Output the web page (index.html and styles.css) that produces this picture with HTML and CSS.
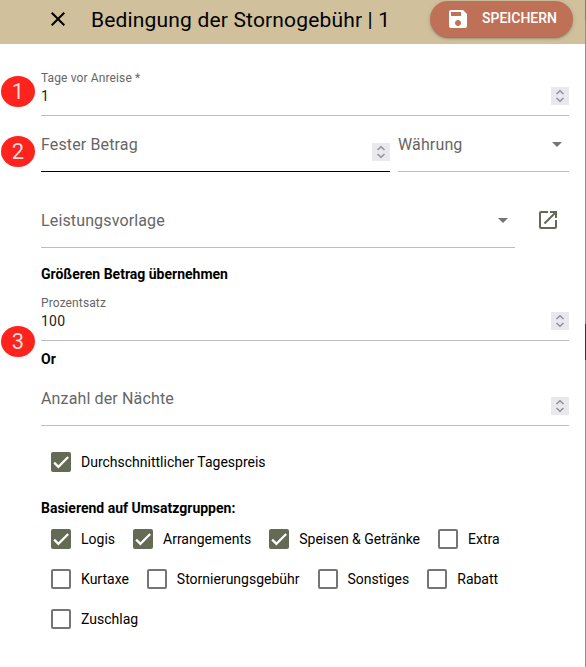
FILE: index.html
```html
<!DOCTYPE html>
<html lang="de">
<head>
    <meta charset="UTF-8">
    <meta name="viewport" content="width=device-width, initial-scale=1.0">
    <title>Bedingung der Stornogebühr</title>
    <link rel="stylesheet" href="styles.css">
</head>
<body>
    <!-- shared icons -->
    <svg class="icon-defs">
        <symbol id="spin" viewBox="0 0 18 18">
            <path d="M5.5 7L9 3.8L12.5 7M5.5 11L9 14.2L12.5 11" fill="none" stroke="#8f8f9d" stroke-width="1.5"/>
        </symbol>
        <symbol id="check" viewBox="0 0 24 24">
            <path d="M1.73 12.91L8.1 19.28L22.79 4.59" fill="none" stroke="#fff" stroke-width="3.3"/>
        </symbol>
    </svg>

    <div class="dialog">
        <div class="header">
            <svg class="close" viewBox="0 0 24 24"><path d="M19 6.41L17.59 5 12 10.59 6.41 5 5 6.41 10.59 12 5 17.59 6.41 19 12 13.41 17.59 19 19 17.59 13.41 12z"/></svg>
            <h1>Bedingung der Stornogebühr | 1</h1>
            <button class="save">
                <svg viewBox="0 0 24 24"><path d="M17 3H5c-1.11 0-2 .9-2 2v14c0 1.1.89 2 2 2h14c1.1 0 2-.9 2-2V7l-4-4zm-5 16c-1.66 0-3-1.34-3-3s1.34-3 3-3 3 1.34 3 3-1.34 3-3 3zm3-10H5V5h10v4z"/></svg>
                <span>SPEICHERN</span>
            </button>
        </div>

        <div class="form">
            <div class="field">
                <div class="text">
                    <label>Tage vor Anreise *</label>
                    <div class="value">1</div>
                </div>
                <svg class="spinner"><use href="#spin"/></svg>
                <span class="badge">1</span>
            </div>

            <div class="row">
                <div class="field amount focused">
                    <div class="placeholder">Fester Betrag</div>
                    <svg class="spinner"><use href="#spin"/></svg>
                    <span class="badge badge-low">2</span>
                </div>
                <div class="field currency">
                    <div class="placeholder">Währung</div>
                    <span class="arrow"></span>
                </div>
            </div>

            <div class="row template-row">
                <div class="field template">
                    <div class="placeholder">Leistungsvorlage</div>
                    <span class="arrow"></span>
                </div>
                <svg class="open" viewBox="0 0 24 24"><path d="M19 19H5V5h7V3H5c-1.11 0-2 .9-2 2v14c0 1.1.89 2 2 2h14c1.1 0 2-.9 2-2v-7h-2v7zM14 3v2h3.59l-9.83 9.83 1.41 1.41L19 6.41V10h2V3h-7z"/></svg>
            </div>

            <h2 class="bigger">Größeren Betrag übernehmen</h2>
            <div class="field">
                <div class="text">
                    <label>Prozentsatz</label>
                    <div class="value">100</div>
                </div>
                <svg class="spinner"><use href="#spin"/></svg>
                <span class="badge badge-bottom">3</span>
            </div>
            <h2 class="or">Or</h2>
            <div class="field">
                <div class="placeholder">Anzahl der Nächte</div>
                <svg class="spinner"><use href="#spin"/></svg>
            </div>

            <div class="checks average">
                <div class="check"><span class="box on"><svg><use href="#check"/></svg></span>Durchschnittlicher Tagespreis</div>
            </div>

            <h2 class="groups">Basierend auf Umsatzgruppen:</h2>
            <div class="checks">
                <div class="check"><span class="box on"><svg><use href="#check"/></svg></span>Logis</div>
                <div class="check"><span class="box on"><svg><use href="#check"/></svg></span>Arrangements</div>
                <div class="check"><span class="box on"><svg><use href="#check"/></svg></span>Speisen &amp; Getränke</div>
                <div class="check"><span class="box"></span>Extra</div>
                <div class="check"><span class="box"></span>Kurtaxe</div>
                <div class="check"><span class="box"></span>Stornierungsgebühr</div>
                <div class="check"><span class="box"></span>Sonstiges</div>
                <div class="check"><span class="box"></span>Rabatt</div>
                <div class="check"><span class="box"></span>Zuschlag</div>
            </div>
        </div>
    </div>
    <div class="edge"></div>
</body>
</html>
```
FILE: styles.css
```css
* {
    box-sizing: border-box;
}
body {
    font-family: Roboto, sans-serif;
    font-size: 14px;
    margin: 0;
    height: 667px;
    background: #fff;
    color: #000;
    display: flex;
    overflow: hidden;
}
.icon-defs {
    position: absolute;
    width: 0;
    height: 0;
}
.dialog {
    width: 585px;
}
/* page behind the dialog */
.edge {
    width: 1px;
    background: linear-gradient(#857c62 20px, #919191 20px, #919191 324px, #333 324px, #333 360px, #919191 360px);
}
.header {
    display: flex;
    align-items: center;
    height: 44px;
    padding: 0 12px 6px 46px;
    background: #d0c09c;
}
.close {
    width: 24px;
    height: 24px;
}
h1 {
    flex: 1;
    margin: 0 0 0 21px;
    padding-top: 2px;
    font-size: 21px;
    font-weight: 400;
    letter-spacing: 0.17px;
    line-height: 32px;
    white-space: nowrap;
}
.save {
    display: flex;
    align-items: center;
    width: 143px;
    height: 36px;
    padding: 0 0 0 16px;
    border: none;
    border-radius: 18px;
    background: #bf7157;
    color: #fff;
    font-family: inherit;
    font-size: 14px;
    font-weight: 500;
    box-shadow: 0 3px 1px -2px rgba(0, 0, 0, 0.2), 0 2px 2px rgba(0, 0, 0, 0.14), 0 1px 5px rgba(0, 0, 0, 0.12);
}
.save svg {
    width: 24px;
    height: 24px;
    margin-right: 12px;
    fill: #fff;
}
.save span {
    padding-bottom: 2px;
}
.form {
    padding: 16px 16px 0 41px;
}
.row {
    display: flex;
    gap: 8px;
}
.field {
    position: relative;
    display: flex;
    justify-content: space-between;
    height: 56px;
    border-bottom: 1px solid #bdbdbd;
}
.focused {
    border-bottom-color: #000;
}
.amount {
    width: 349px;
}
.currency {
    flex: 1;
}
.template-row {
    margin-top: 20px;
}
.template {
    width: 474px;
}
.text {
    padding-top: 10px;
}
label {
    display: block;
    font-size: 12px;
    line-height: 16px;
    letter-spacing: 0.12px;
    color: #666;
}
.value {
    line-height: 20px;
    letter-spacing: 0.2px;
    color: #212121;
}
.placeholder {
    font-size: 16px;
    line-height: 58px;
    letter-spacing: 0.14px;
    color: #666;
}
.spinner {
    width: 18px;
    height: 18px;
    margin-top: 27px;
    background: #e9e9ed;
}
.arrow {
    width: 0;
    height: 0;
    margin: 26px 7px 0 0;
    border: 5px solid transparent;
    border-top-color: #757575;
    border-bottom: none;
}
.open {
    width: 24px;
    height: 24px;
    margin: 16px 0 0 13px;
    fill: #636b54;
}
.badge {
    position: absolute;
    left: -40px;
    top: 16px;
    width: 34px;
    height: 31px;
    border-radius: 50%;
    background: #ff231d;
    color: #e3dcdc;
    font-size: 22px;
    line-height: 31px;
    text-align: center;
}
.badge-low {
    top: 20px;
}
.badge-bottom {
    top: 41px;
}
h2 {
    margin: 0;
    font-size: 14px;
    font-weight: 700;
    line-height: 20px;
}
.bigger {
    padding: 16px 0 1px;
}
.or {
    padding: 8px 0 1px;
}
.groups {
    padding: 16px 0 1px;
}
.average {
    margin-top: 16px;
}
.checks {
    display: flex;
    flex-wrap: wrap;
    column-gap: 8px;
    width: 500px;
}
.check {
    display: flex;
    align-items: center;
    height: 40px;
    white-space: nowrap;
}
.box {
    width: 20px;
    height: 20px;
    margin: 0 10px;
    border: 2px solid #757575;
    border-radius: 2px;
}
.box.on {
    border-color: #636b54;
    background: #636b54;
}
.box svg {
    display: block;
    width: 16px;
    height: 16px;
}
```
